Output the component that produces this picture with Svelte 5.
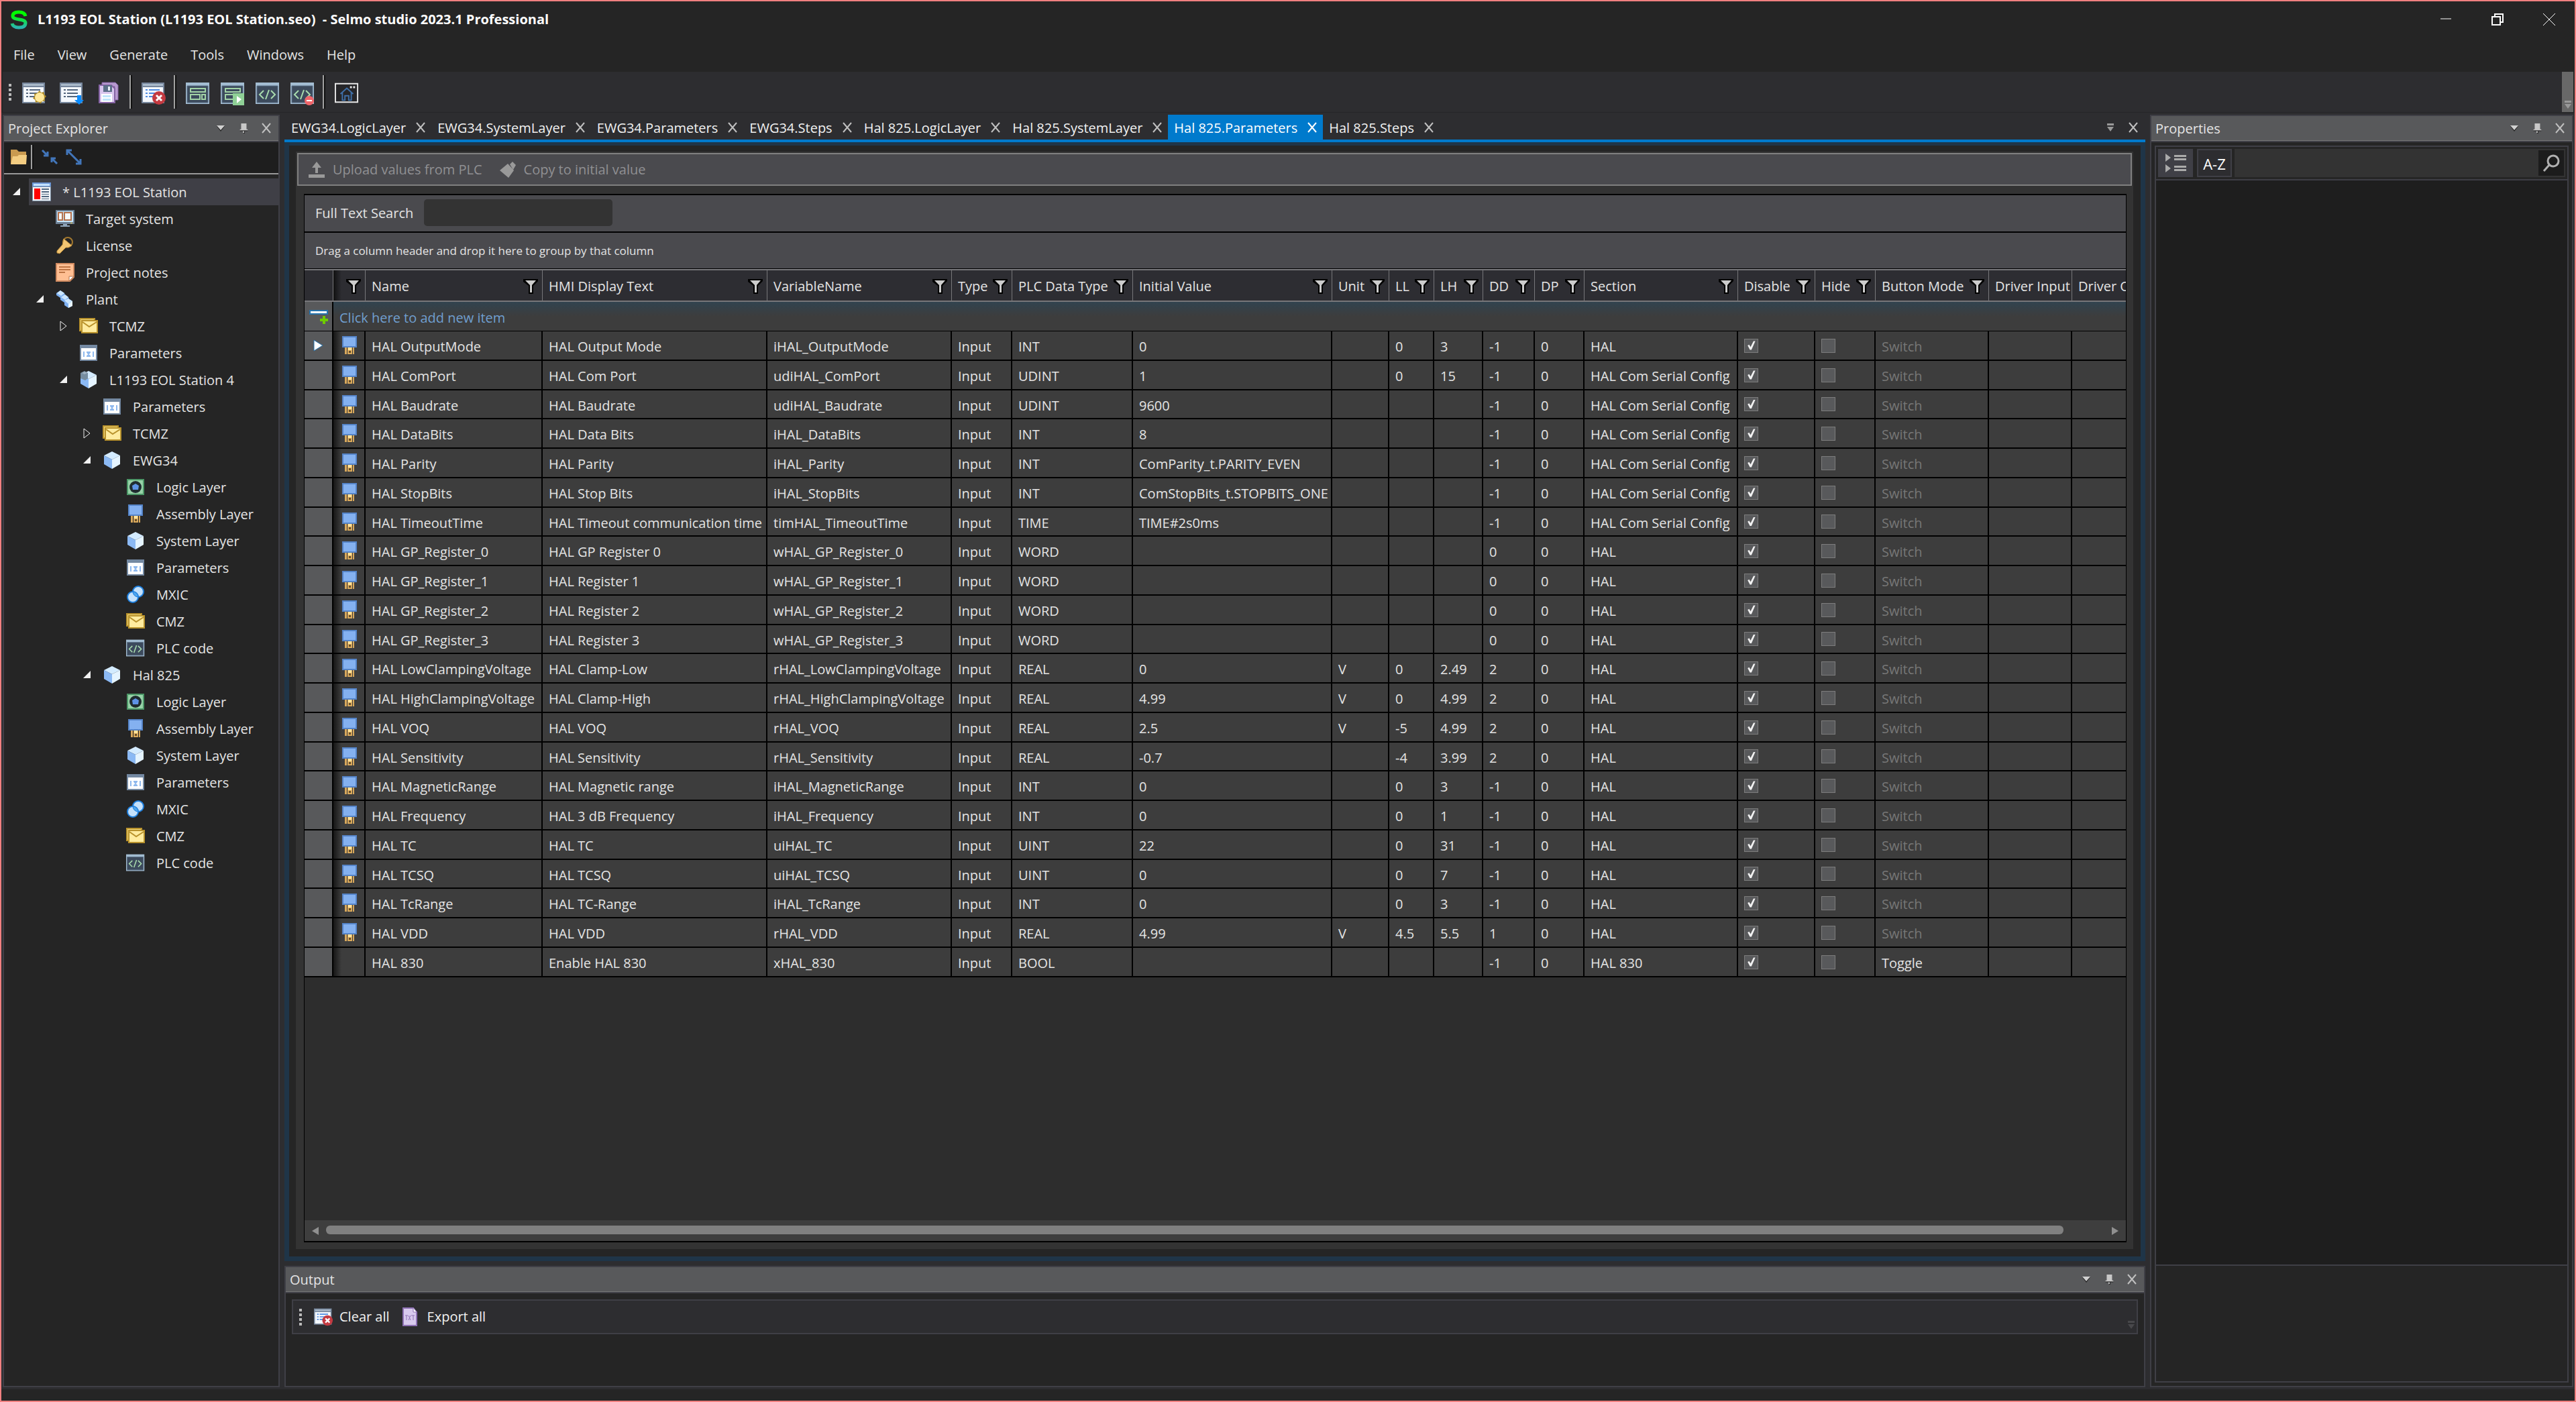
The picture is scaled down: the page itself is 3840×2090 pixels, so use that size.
<script lang="ts">
  type TreeNode = { label: string; icon: string; level: number; state?: 'open' | 'closed'; selected?: boolean };
  type Column = { title: string; width: number; filter: boolean };

  const menus = ['File', 'View', 'Generate', 'Tools', 'Windows', 'Help'];

  const toolGroups = [
    [
      { icon: 'new', label: 'New project' },
      { icon: 'open', label: 'Open project' },
      { icon: 'save', label: 'Save all' },
    ],
    [{ icon: 'close-project', label: 'Close project' }],
    [
      { icon: 'layout', label: 'HMI layout' },
      { icon: 'layout-run', label: 'Run HMI' },
      { icon: 'code', label: 'Generate PLC code' },
      { icon: 'code-remove', label: 'Remove PLC code' },
    ],
    [{ icon: 'home', label: 'Home' }],
  ];

  const zoneChildren: [string, string][] = [
    ['Logic Layer', 'logic'],
    ['Assembly Layer', 'assembly'],
    ['System Layer', 'cube'],
    ['Parameters', 'params'],
    ['MXIC', 'mxic'],
    ['CMZ', 'mail'],
    ['PLC code', 'plc'],
  ];
  const zone = (label: string): TreeNode[] => [
    { label, icon: 'cube', level: 3, state: 'open' },
    ...zoneChildren.map(([l, icon]) => ({ label: l, icon, level: 4 })),
  ];

  const tree: TreeNode[] = [
    { label: '* L1193 EOL Station', icon: 'project', level: 0, state: 'open', selected: true },
    { label: 'Target system', icon: 'target', level: 1 },
    { label: 'License', icon: 'key', level: 1 },
    { label: 'Project notes', icon: 'notes', level: 1 },
    { label: 'Plant', icon: 'plant', level: 1, state: 'open' },
    { label: 'TCMZ', icon: 'mail', level: 2, state: 'closed' },
    { label: 'Parameters', icon: 'params', level: 2 },
    { label: 'L1193 EOL Station 4', icon: 'station', level: 2, state: 'open' },
    { label: 'Parameters', icon: 'params', level: 3 },
    { label: 'TCMZ', icon: 'mail', level: 3, state: 'closed' },
    ...zone('EWG34'),
    ...zone('Hal 825'),
  ];

  const tabs = [
    'EWG34.LogicLayer',
    'EWG34.SystemLayer',
    'EWG34.Parameters',
    'EWG34.Steps',
    'Hal 825.LogicLayer',
    'Hal 825.SystemLayer',
    'Hal 825.Parameters',
    'Hal 825.Steps',
  ];
  let activeTab = $state('Hal 825.Parameters');
  let search = $state('');
  let propertySearch = $state('');

  const columns: Column[] = [
    { title: '', width: 43, filter: false },
    { title: '', width: 48, filter: true },
    { title: 'Name', width: 264, filter: true },
    { title: 'HMI Display Text', width: 335, filter: true },
    { title: 'VariableName', width: 275, filter: true },
    { title: 'Type', width: 90, filter: true },
    { title: 'PLC Data Type', width: 180, filter: true },
    { title: 'Initial Value', width: 297, filter: true },
    { title: 'Unit', width: 85, filter: true },
    { title: 'LL', width: 67, filter: true },
    { title: 'LH', width: 73, filter: true },
    { title: 'DD', width: 77, filter: true },
    { title: 'DP', width: 74, filter: true },
    { title: 'Section', width: 229, filter: true },
    { title: 'Disable', width: 115, filter: true },
    { title: 'Hide', width: 90, filter: true },
    { title: 'Button Mode', width: 169, filter: true },
    { title: 'Driver Input', width: 124, filter: false },
    { title: 'Driver Output', width: 180, filter: false },
  ];
  const tableWidth = columns.reduce((sum, c) => sum + c.width, 0);

  // name, display text, variable, data type, initial, unit, LL, LH, DD, DP, section
  const rows: string[][] = [
    ['HAL OutputMode', 'HAL Output Mode', 'iHAL_OutputMode', 'INT', '0', '', '0', '3', '-1', '0', 'HAL'],
    ['HAL ComPort', 'HAL Com Port', 'udiHAL_ComPort', 'UDINT', '1', '', '0', '15', '-1', '0', 'HAL Com Serial Config'],
    ['HAL Baudrate', 'HAL Baudrate', 'udiHAL_Baudrate', 'UDINT', '9600', '', '', '', '-1', '0', 'HAL Com Serial Config'],
    ['HAL DataBits', 'HAL Data Bits', 'iHAL_DataBits', 'INT', '8', '', '', '', '-1', '0', 'HAL Com Serial Config'],
    ['HAL Parity', 'HAL Parity', 'iHAL_Parity', 'INT', 'ComParity_t.PARITY_EVEN', '', '', '', '-1', '0', 'HAL Com Serial Config'],
    ['HAL StopBits', 'HAL Stop Bits', 'iHAL_StopBits', 'INT', 'ComStopBits_t.STOPBITS_ONE', '', '', '', '-1', '0', 'HAL Com Serial Config'],
    ['HAL TimeoutTime', 'HAL Timeout communication time', 'timHAL_TimeoutTime', 'TIME', 'TIME#2s0ms', '', '', '', '-1', '0', 'HAL Com Serial Config'],
    ['HAL GP_Register_0', 'HAL GP Register 0', 'wHAL_GP_Register_0', 'WORD', '', '', '', '', '0', '0', 'HAL'],
    ['HAL GP_Register_1', 'HAL Register 1', 'wHAL_GP_Register_1', 'WORD', '', '', '', '', '0', '0', 'HAL'],
    ['HAL GP_Register_2', 'HAL Register 2', 'wHAL_GP_Register_2', 'WORD', '', '', '', '', '0', '0', 'HAL'],
    ['HAL GP_Register_3', 'HAL Register 3', 'wHAL_GP_Register_3', 'WORD', '', '', '', '', '0', '0', 'HAL'],
    ['HAL LowClampingVoltage', 'HAL Clamp-Low', 'rHAL_LowClampingVoltage', 'REAL', '0', 'V', '0', '2.49', '2', '0', 'HAL'],
    ['HAL HighClampingVoltage', 'HAL Clamp-High', 'rHAL_HighClampingVoltage', 'REAL', '4.99', 'V', '0', '4.99', '2', '0', 'HAL'],
    ['HAL VOQ', 'HAL VOQ', 'rHAL_VOQ', 'REAL', '2.5', 'V', '-5', '4.99', '2', '0', 'HAL'],
    ['HAL Sensitivity', 'HAL Sensitivity', 'rHAL_Sensitivity', 'REAL', '-0.7', '', '-4', '3.99', '2', '0', 'HAL'],
    ['HAL MagneticRange', 'HAL Magnetic range', 'iHAL_MagneticRange', 'INT', '0', '', '0', '3', '-1', '0', 'HAL'],
    ['HAL Frequency', 'HAL 3 dB Frequency', 'iHAL_Frequency', 'INT', '0', '', '0', '1', '-1', '0', 'HAL'],
    ['HAL TC', 'HAL TC', 'uiHAL_TC', 'UINT', '22', '', '0', '31', '-1', '0', 'HAL'],
    ['HAL TCSQ', 'HAL TCSQ', 'uiHAL_TCSQ', 'UINT', '0', '', '0', '7', '-1', '0', 'HAL'],
    ['HAL TcRange', 'HAL TC-Range', 'iHAL_TcRange', 'INT', '0', '', '0', '3', '-1', '0', 'HAL'],
    ['HAL VDD', 'HAL VDD', 'rHAL_VDD', 'REAL', '4.99', 'V', '4.5', '5.5', '1', '0', 'HAL'],
    ['HAL 830', 'Enable HAL 830', 'xHAL_830', 'BOOL', '', '', '', '', '-1', '0', 'HAL 830'],
  ];
</script>

{#snippet cross()}
  <svg class="cross" viewBox="0 0 16 16" aria-hidden="true"><path d="M2 1l12 14M14 1L2 15" /></svg>
{/snippet}

{#snippet panelHeader(title: string)}
  <header class="panel-header">
    <h2>{title}</h2>
    <button aria-label="{title} options"><svg viewBox="0 0 16 16"><path d="M2 5h12L8 13z" fill="#222" /><path d="M2 4h12L8 11z" fill="#d0d0d0" /></svg></button>
    <button aria-label="Pin {title}"><svg viewBox="0 0 16 18"><path d="M4 1h9v10h2v2H2v-2h2z" fill="#c8c8c8" /><path d="M2 13h13v1H2zM8 14h2v4H8z" fill="#222" /><path d="M7 14h2v3H7z" fill="#c8c8c8" /></svg></button>
    <button aria-label="Close {title}">{@render cross()}</button>
  </header>
{/snippet}

{#snippet overflowMark()}
  <svg class="overflow-mark" viewBox="0 0 12 14" aria-hidden="true"><path d="M1 1h10v3H1zM1 6h10l-5 7z" fill="currentColor" /></svg>
{/snippet}

{#snippet icon(name: string)}
  {#if name === 'new' || name === 'open' || name === 'close-project'}
    <svg viewBox="0 0 36 36">
      <path d="M0 2h34v31H0z" fill="#76869c" />
      <path d="M2 4h30v3H2z" fill="#a9b9c9" />
      <path d="M2 9h30v22H2z" fill="#f4f8fd" />
      <path d="M6 12h3v2H6zM6 17h3v2H6zM6 22h3v2H6zM11 12h16v2H11zM11 17h16v2H11zM11 22h16v2H11z" fill={name === 'close-project' ? '#4f8be0' : '#53657c'} />
      {#if name === 'new'}
        <path d="M26 14l2.500 3 4-1 .5 4 3 2.500-2.500 3 .5 4-4 .5-2.500 3.500-3.500-2.500-4 1-.5-4-3.500-2.500 2.500-3-.5-4 4-.5z" fill="#b08b24" />
        <circle cx="26" cy="24" r="7" fill="#ffe89a" />
      {:else if name === 'open'}
        <path d="M26 21h6v7h4l-7 7-7-7h4z" fill="#0a8cff" />
      {:else}
        <circle cx="26" cy="25" r="10" fill="#c43a41" />
        <path d="M22 21l8 8M30 21l-8 8" stroke="#fff" stroke-width="3" />
      {/if}
    </svg>
  {:else if name === 'save'}
    <svg viewBox="0 0 36 36">
      <path d="M7 2h20l4 4v22h-5V8H7z" fill="#b79ad0" stroke="#8563a4" />
      <path d="M3 6h18l5 5v21H3z" fill="#d9c7ee" stroke="#8563a4" stroke-width="2" />
      <path d="M9 6h13v10H9z" fill="#5b6f88" /><path d="M16 8h3v6h-3z" fill="#e8eef6" />
      <path d="M6 19h16v12H6z" fill="#fff" /><path d="M8 21h12v3H8zM8 26h12v3H8z" fill="#bfe6fb" />
    </svg>
  {:else if name === 'layout' || name === 'layout-run' || name === 'code' || name === 'code-remove' || name === 'plc'}
    <svg viewBox="0 0 36 36">
      <path d="M0 2h35v32H0z" fill="#a3bdd2" />
      <path d="M2 7h31v25H2z" fill="#3c4a5c" stroke="#5a6f86" />
      {#if name.startsWith('layout')}
        <path d="M7 11h22v5H7zM7 20h14v7H7zM24 20h5v7h-5z" fill="none" stroke="#a2d3a6" stroke-width="2" />
      {:else}
        <path d="M12 14l-6 6 6 6M23 14l6 6-6 6M20 13l-5 14" fill="none" stroke="#a9dcae" stroke-width="2" />
      {/if}
      {#if name === 'layout-run'}
        <path d="M18 18h17v18H18z" fill="#8fd096" /><path d="M24 22l7 5-7 6z" fill="#fff" />
      {:else if name === 'code-remove'}
        <circle cx="28" cy="29" r="7" fill="#f0666b" /><path d="M24 28h8v2h-8z" fill="#fff" />
      {/if}
    </svg>
  {:else if name === 'home'}
    <svg viewBox="0 0 38 34">
      <path d="M1 2h35v29H1z" fill="#252528" stroke="#e8e8e8" stroke-width="2" />
      <path d="M24 6h3v3h-3zM29 6h3v3h-3z" fill="#e8e8e8" />
      <path d="M9 18L19 9l10 9M12 16v12h4v-7h6v7h4V16" fill="none" stroke="#3f6fa8" stroke-width="2" />
    </svg>
  {:else if name === 'project'}
    <svg viewBox="0 0 28 28">
      <path d="M0 0h28v28H0z" fill="#7e90a6" /><path d="M0 0h28v6H0z" fill="#6b97d6" /><path d="M2 2h24v3H2z" fill="#c4e2ff" />
      <path d="M1 7h26v20H1z" fill="#f2f6fa" /><path d="M3 9h9v16H3z" fill="#f00" />
      <path d="M14 9h11v2H14zM14 13h11v2H14zM14 17h11v1H14zM14 20h11v2H14zM14 24h11v1H14z" fill="#51677f" />
    </svg>
  {:else if name === 'target'}
    <svg viewBox="0 0 28 28">
      <path d="M0 1h28v21H0z" fill="#6d8196" /><path d="M2 3h24v16H2z" fill="#c9e7fb" />
      <path d="M4 5h6v11H4zM13 5h10v11H13z" fill="#f5f8fb" stroke="#b5714c" stroke-width="2" />
      <path d="M22 20h3v1h-3z" fill="#f5cf4a" /><path d="M11 22h6v2h4v2H7v-2h4z" fill="#8fa5ba" />
    </svg>
  {:else if name === 'key'}
    <svg viewBox="0 0 28 28">
      <circle cx="18" cy="9" r="7" fill="none" stroke="#a2782f" stroke-width="2" />
      <path d="M12 4l12 10-5 3-4 0-9 9-4-1v-3l8-9z" fill="#f2c572" stroke="#c3923c" />
    </svg>
  {:else if name === 'notes'}
    <svg viewBox="0 0 28 28">
      <path d="M1 1h26v20l-6 6H1z" fill="#ffbf93" stroke="#d08b61" stroke-width="2" />
      <path d="M5 6h17M5 10h17M5 14h9" stroke="#bc7444" stroke-width="2" /><path d="M20 27v-7h7z" fill="#fff" stroke="#b4724a" />
    </svg>
  {:else if name === 'plant'}
    <svg viewBox="0 0 28 28">
      <path d="M1 5l6-4 6 4 1 3 5 3 1 3 5 3v7l-6 3-6-4v-4l-6-4v-3l-6-4z" fill="#7eb1f2" />
      <path d="M2 5l5-4 6 4-5 4zM8 11l6-4 5 4-5 4zM13 16l6-3 6 4-6 4z" fill="#cbe6ff" /><path d="M19 21l6-4v7l-6 3z" fill="#e9f6ff" />
    </svg>
  {:else if name === 'cube' || name === 'station'}
    <svg viewBox="0 0 28 28">
      <path d="M2 7l12-6 12 6-12 6z" fill="#d3ebff" /><path d="M2 7l12 6v14L2 20z" fill="#8bb9f4" /><path d="M26 7l-12 6v14l12-7z" fill="#e5f4ff" />
      {#if name === 'station'}
        <path d="M2 4l6-3 5 3v8l-4 3-7-3z" fill="#768da0" /><path d="M4 4l4-2 4 2-4 2z" fill="#9fb2c2" />
      {/if}
    </svg>
  {:else if name === 'mail'}
    <svg viewBox="0 0 28 28">
      <path d="M1 3h22v18H1z" fill="#f1d67a" stroke="#b8922c" stroke-width="2" />
      <path d="M4 6h23v18H4z" fill="#ffec9f" stroke="#b8922c" stroke-width="2" /><path d="M5 8l10 7L26 8" fill="none" stroke="#b8922c" stroke-width="2" />
    </svg>
  {:else if name === 'params'}
    <svg viewBox="0 0 28 28">
      <path d="M1 2h26v24H1z" fill="#7489a2" /><path d="M3 7h22v17H3z" fill="#fff" />
      <path d="M7 12v8M21 12v8M11 13h6M11 19h6M12 13l4 6M16 13l-4 6" stroke="#8fb9ee" stroke-width="2" />
    </svg>
  {:else if name === 'logic'}
    <svg viewBox="0 0 28 28">
      <path d="M2 3h24v22H2z" fill="#97d3a8" stroke="#4c9767" stroke-width="2" />
      <circle cx="14" cy="14" r="9" fill="#202c31" /><path d="M14 9l5 3-1 6h-8l-1-6z" fill="#5e93e6" />
    </svg>
  {:else if name === 'assembly'}
    <svg viewBox="0 0 28 28">
      <path d="M4 1h20v15H4z" fill="#84b1f0" stroke="#5584c8" stroke-width="2" />
      <path d="M7 17h3v10H7zM19 17h2v10h-2zM11 17h7v10h-7z" fill="#d9a95c" /><path d="M12 17h5v4h-5z" fill="#ffe39b" /><path d="M13 22h3v3h-3z" fill="#69502a" />
    </svg>
  {:else if name === 'mxic'}
    <svg viewBox="0 0 28 28">
      <circle cx="18" cy="10" r="8" fill="#c4e1fb" stroke="#1e7fdd" stroke-width="2" /><circle cx="10" cy="18" r="8" fill="#c4e1fb" stroke="#1e7fdd" stroke-width="2" />
      <path d="M10 10a8 8 0 0 1 8 8 8 8 0 0 1-8-8z" fill="#4da6ef" stroke="#1e7fdd" />
    </svg>
  {/if}
{/snippet}

<div class="window">
  <header class="titlebar">
    <svg class="logo" viewBox="0 0 28 30" aria-hidden="true">
      <defs><linearGradient id="logo" x1="0" y1="0" x2="0" y2="1"><stop offset="0.2" stop-color="#0f0" /><stop offset="1" stop-color="#2ab5b0" /></linearGradient></defs>
      <path d="M24 10C23 5 19 4 14 4 8 4 5 6 5 10c0 7 19 3 19 10 0 5-4 7-10 7-6 0-9-2-10-6" fill="none" stroke="url(#logo)" stroke-width="5" />
    </svg>
    <h1>L1193 EOL Station (L1193 EOL Station.seo)&nbsp; - Selmo studio 2023.1 Professional</h1>
    <div class="window-buttons">
      <button aria-label="Minimize"><svg viewBox="0 0 20 20"><path d="M2 9h16" /></svg></button>
      <button aria-label="Restore"><svg viewBox="0 0 20 20"><path d="M2 6h12v12H2zM6 6V2h12v12h-4" stroke-width="2" /></svg></button>
      <button aria-label="Close"><svg viewBox="0 0 20 20"><path d="M1 1l18 18M19 1L1 19" /></svg></button>
    </div>
  </header>

  <nav class="menubar">
    {#each menus as menu (menu)}
      <button>{menu}</button>
    {/each}
  </nav>

  <div class="toolbar">
    <span class="grip"></span>
    {#each toolGroups as group, i (i)}
      {#if i > 0}<span class="separator"></span>{/if}
      <div class="tool-group" class:first={i === 0}>
        {#each group as tool (tool.icon)}
          <button aria-label={tool.label}>{@render icon(tool.icon)}</button>
        {/each}
      </div>
    {/each}
    <button class="toolbar-overflow" aria-label="Toolbar options">{@render overflowMark()}</button>
  </div>

  <div class="workspace">
    <aside class="panel explorer">
      {@render panelHeader('Project Explorer')}
      <div class="explorer-tools">
        <button aria-label="Open folder"><svg viewBox="0 0 26 24"><path d="M1 1h9l3 3h11v18H1z" fill="#c99a50" /><path d="M1 23l3-12h7l2-2h12l-1 14z" fill="#f3cd82" /></svg></button>
        <span class="separator"></span>
        <button aria-label="Collapse all"><svg viewBox="0 0 24 24"><path d="M1 2l8 8M9 4v6H3M23 22l-8-8M15 20v-6h6" fill="none" stroke="#4276ba" stroke-width="3" /></svg></button>
        <button aria-label="Expand all"><svg viewBox="0 0 24 24"><path d="M2 2l20 20M2 9V2h7M22 15v7h-7" fill="none" stroke="#4276ba" stroke-width="3" /></svg></button>
      </div>
      <ul class="tree">
        {#each tree as node, i (i)}
          <li style="padding-left: {node.level * 35}px">
            <span class="expander">
              {#if node.state === 'open'}
                <svg viewBox="0 0 12 16"><path d="M11 2v11H0z" fill="#f1f1f1" /></svg>
              {:else if node.state === 'closed'}
                <svg viewBox="0 0 12 16"><path d="M1 1l9 7-9 7z" fill="none" stroke="#f1f1f1" /></svg>
              {/if}
            </span>
            <span class="node" class:selected={node.selected}>{@render icon(node.icon)}<span class="label">{node.label}</span></span>
          </li>
        {/each}
      </ul>
    </aside>

    <main class="center">
      <div class="tabs">
        {#each tabs as tab (tab)}
          <div class="tab" class:active={tab === activeTab}>
            <button class="label" onclick={() => (activeTab = tab)}>{tab}</button>
            <button aria-label="Close {tab}">{@render cross()}</button>
          </div>
        {/each}
        <div class="tab-actions">
          <button aria-label="Tab list">{@render overflowMark()}</button>
          <button aria-label="Close document">{@render cross()}</button>
        </div>
      </div>

      <section class="document">
        <div class="document-frame">
          <div class="document-body">
            <div class="plc-actions">
              <button disabled><svg viewBox="0 0 26 26"><path d="M13 1l7 9h-5v8h-4v-8H6zM1 20h24v5H1z" /></svg>Upload values from PLC</button>
              <button disabled><svg viewBox="0 0 26 26"><path d="M13 4l9 10-8 11L1 14zM16 5l4-4 5 5-4 7z" /></svg>Copy to initial value</button>
            </div>

            <div class="grid">
              <div class="search-row">
                <label for="full-text">Full Text Search</label>
                <input id="full-text" type="text" bind:value={search} />
              </div>
              <div class="group-row">Drag a column header and drop it here to group by that column</div>
              <div class="table-area">
                <table style="width: {tableWidth}px">
                  <colgroup>
                    {#each columns as column, i (i)}<col style="width: {column.width}px" />{/each}
                  </colgroup>
                  <thead>
                    <tr>
                      {#each columns as column, i (i)}
                        <th class:shaded={i === 1}>
                          <div class="head-cell">
                            <span>{column.title}</span>
                            {#if column.filter}
                              <button aria-label="Filter {column.title}"><svg viewBox="0 0 22 22"><path d="M0 0h22v3l-7 7v12H8V10L0 4z" fill="#000" /><path d="M3 2h16l-6 7v11h-3V9z" fill="#ccc" /></svg></button>
                            {/if}
                          </div>
                        </th>
                      {/each}
                    </tr>
                    <tr class="new-item">
                      <td class="row-header"><svg class="add-icon" viewBox="0 0 30 22"><path d="M1 2h26v5H1z" fill="#fff" stroke="#2673ad" stroke-width="2" /><path d="M20 10h4v4h4v4h-4v4h-4v-4h-4v-4h4z" fill="#6ecb00" /></svg></td>
                      <td colspan={columns.length - 1}>Click here to add new item</td>
                    </tr>
                  </thead>
                  <tbody>
                    {#each rows as row, i (row[0])}
                      {@const toggle = i === rows.length - 1}
                      <tr>
                        <td class="row-header">
                          {#if i === 0}<svg class="current" viewBox="0 0 18 18"><path d="M2 1l13 8-13 8z" fill="#fff" stroke="#2673ad" /></svg>{/if}
                        </td>
                        <td class="shaded layer-cell">{#if !toggle}{@render icon('assembly')}{/if}</td>
                        {#each row.slice(0, 3) as value, j (j)}<td>{value}</td>{/each}
                        <td>Input</td>
                        {#each row.slice(3) as value, j (j)}<td>{value}</td>{/each}
                        <td class="check"><input type="checkbox" checked aria-label="Disable {row[0]}" /></td>
                        <td class="check"><input type="checkbox" aria-label="Hide {row[0]}" /></td>
                        <td class:muted={!toggle}>{toggle ? 'Toggle' : 'Switch'}</td>
                        <td></td>
                        <td></td>
                      </tr>
                    {/each}
                  </tbody>
                </table>
              </div>
              <div class="scrollbar">
                <button aria-label="Scroll left"><svg viewBox="0 0 12 14"><path d="M11 1v12L1 7z" /></svg></button>
                <div class="track"><div class="thumb"></div></div>
                <button aria-label="Scroll right"><svg viewBox="0 0 12 14"><path d="M1 1v12l10-6z" /></svg></button>
              </div>
            </div>
          </div>
        </div>
      </section>

      <section class="panel output">
        {@render panelHeader('Output')}
        <div class="output-tools">
          <span class="grip"></span>
          <button>{@render icon('close-project')}Clear all</button>
          <button><svg viewBox="0 0 28 28"><path d="M2 1h15l5 6v20H2z" fill="#d8caee" stroke="#8f72b5" stroke-width="2" /><path d="M17 1v6h5" fill="#fff" stroke="#8f72b5" /><path d="M5 12h4M7 12v7M10 12l3 7M13 12l-3 7M14 12h5M17 12v7" stroke="#8f72b5" /></svg>Export all</button>
          <span class="output-overflow">{@render overflowMark()}</span>
        </div>
      </section>
    </main>

    <aside class="panel properties">
      {@render panelHeader('Properties')}
      <div class="property-box">
        <div class="property-tools">
          <button class="grouped" aria-label="Group by category"><svg viewBox="0 0 32 30"><path d="M0 1l8 6-8 6zM0 17l8 6-8 6z" /><path d="M13 3h18v3H13zM13 8h18v3H13zM13 19h18v3H13zM13 24h18v3H13z" /></svg></button>
          <button class="sorted">A-Z</button>
          <div class="property-search">
            <input type="text" aria-label="Search properties" bind:value={propertySearch} />
            <button aria-label="Search"><svg viewBox="0 0 26 26"><circle cx="16" cy="10" r="8" /><path d="M10 16l-8 9" /></svg></button>
          </div>
        </div>
        <div class="property-list"></div>
        <div class="property-description"></div>
      </div>
    </aside>
  </div>
</div>

<style>
  :global(body) {
    margin: 0;
    background: #252525;
  }
  .window {
    box-sizing: border-box;
    min-height: 100vh;
    display: flex;
    flex-direction: column;
    border: 2px solid #f08080;
    padding-bottom: 17px;
    background: #252525;
    color: #e4e4e4;
    font-family: 'Open Sans', 'Noto Sans', sans-serif;
    font-size: 20px;
    line-height: 28px;
  }
  button, input {
    font: inherit;
    color: inherit;
    background: none;
    border: 0;
    padding: 0;
    margin: 0;
  }
  svg {
    display: block;
    flex: none;
  }
  h1, h2 {
    margin: 0;
    font-size: 20px;
  }
  .titlebar {
    display: flex;
    align-items: center;
    height: 54px;
    padding: 0 28px 0 12px;
    color: #fff;
  }
  .logo {
    width: 28px;
    height: 30px;
    margin: 0 14px 0 0;
  }
  h1 {
    flex: 1;
  }
  .window-buttons {
    display: flex;
    gap: 57px;
  }
  .window-buttons svg {
    width: 20px;
    height: 20px;
    fill: none;
    stroke: #fff;
  }
  .menubar {
    display: flex;
    gap: 34px;
    height: 51px;
    padding-left: 18px;
  }
  .toolbar {
    display: flex;
    align-items: center;
    height: 61px;
    margin: 0 2px;
    padding-left: 9px;
    background: #2d2d30;
    border-bottom: 1px solid #252528;
    box-sizing: border-box;
  }
  .grip {
    width: 4px;
    height: 25px;
    background: repeating-linear-gradient(#bbb 0 4px, transparent 4px 7px);
  }
  .separator {
    width: 2px;
    height: 50px;
    background: #a0a0a0;
    border-right: 2px solid #111;
    margin: 0 14px 0 12px;
  }
  .tool-group {
    display: flex;
    gap: 16px;
    padding-top: 4px;
  }
  .tool-group.first {
    gap: 20px;
    margin-left: 16px;
  }
  .tool-group svg {
    width: 36px;
    height: 36px;
  }
  .toolbar-overflow {
    align-self: stretch;
    display: flex;
    align-items: flex-end;
    justify-content: center;
    width: 17px;
    margin-left: auto;
    padding-bottom: 4px;
    background: #686868;
    color: #999;
  }
  .overflow-mark {
    width: 12px;
    height: 14px;
  }
  .workspace {
    flex: 1;
    display: flex;
    gap: 7px;
    padding: 3px 2px;
    background: #2d2d30;
  }
  .panel {
    box-sizing: border-box;
    display: flex;
    flex-direction: column;
    border: 2px solid #3f3f46;
    background: #252525;
  }
  .panel-header {
    display: flex;
    align-items: center;
    gap: 18px;
    height: 36px;
    padding: 0 10px 0 6px;
    background: #58595b;
    border-bottom: 1px solid #777;
    box-shadow: 0 2px 0 #3f3f46;
  }
  .panel-header h2 {
    flex: 1;
    padding-top: 2px;
    font-weight: 400;
  }
  .panel-header svg {
    width: 16px;
    height: 16px;
  }
  .cross {
    width: 16px;
    height: 16px;
    fill: none;
    stroke: #c0c0c0;
    stroke-width: 2;
  }
  .label {
    padding-top: 2px;
  }
  .explorer {
    flex: 0 0 413px;
  }
  .explorer-tools {
    display: flex;
    align-items: center;
    height: 43px;
    margin-top: 2px;
    padding-left: 9px;
    padding-bottom: 3px;
    background: #1e1e1e;
    border-bottom: 2px solid #999;
  }
  .explorer-tools svg {
    width: 26px;
    height: 24px;
  }
  .explorer-tools .separator {
    height: 36px;
    margin: 0 11px 0 5px;
  }
  .explorer-tools button + button {
    margin-left: 10px;
  }
  .tree {
    list-style: none;
    margin: 0;
    padding: 6px 0 0;
  }
  .tree li {
    display: flex;
    height: 40px;
  }
  .expander {
    display: flex;
    align-items: center;
    width: 37px;
    box-sizing: border-box;
    padding-left: 13px;
  }
  .expander svg {
    width: 12px;
    height: 16px;
  }
  .node {
    flex: 1;
    display: flex;
    align-items: center;
    gap: 17px;
    padding-left: 5px;
  }
  .node.selected {
    background: #3f3f46;
  }
  .node :global(svg) {
    width: 28px;
    height: 28px;
  }
  .center {
    flex: 1;
    min-width: 0;
    display: flex;
    flex-direction: column;
  }
  .tabs {
    display: flex;
    height: 37px;
    padding-left: 1px;
  }
  .tab {
    display: flex;
    align-items: center;
    gap: 14px;
    padding: 0 8px 0 9px;
    color: #f1f1f1;
  }
  .tab.active {
    background: #007acc;
    color: #fff;
  }
  .tab.active .cross {
    stroke: #fff;
  }
  .tab-actions {
    display: flex;
    align-items: center;
    gap: 20px;
    margin-left: auto;
    padding-right: 10px;
    color: #999;
  }
  .document {
    flex: 1;
    display: flex;
    border-top: 4px solid #007acc;
  }
  .document-frame {
    flex: 1;
    min-width: 0;
    display: flex;
    padding: 9px 11px 11px 10px;
    border: 7px solid #1f3548;
    border-top-width: 5px;
    background: #252525;
  }
  .document-body {
    flex: 1;
    min-width: 0;
    display: flex;
    flex-direction: column;
    gap: 12px;
    padding: 2px 2px 10px;
    background: #333;
  }
  .plc-actions {
    display: flex;
    align-items: center;
    gap: 25px;
    height: 45px;
    padding-left: 14px;
    border: 2px solid #808080;
    background: #4a4a4e;
  }
  .plc-actions button {
    display: flex;
    align-items: center;
    gap: 11px;
    color: #909093;
  }
  .plc-actions svg {
    width: 26px;
    height: 26px;
    fill: #999;
  }
  .grid {
    flex: 1;
    display: flex;
    flex-direction: column;
    margin: 0 8px 0 10px;
    border: 1px solid #000;
    border-width: 2px 1px;
    background: #2d2d2d;
  }
  .search-row {
    display: flex;
    align-items: center;
    gap: 16px;
    height: 54px;
    padding-left: 16px;
    background: #4a4a4e;
    border-bottom: 2px solid #000;
  }
  .search-row input {
    width: 281px;
    height: 40px;
    box-sizing: border-box;
    padding: 0 10px;
    margin-bottom: 2px;
    border-radius: 5px;
    background: #333;
  }
  .group-row {
    height: 53px;
    padding-left: 16px;
    background: #4a4a4e;
    border-bottom: 1px solid #000;
    font-size: 17px;
    line-height: 54px;
  }
  .table-area {
    flex: 1;
    overflow: hidden;
  }
  table {
    table-layout: fixed;
    border-collapse: separate;
    border-spacing: 0;
  }
  th, td {
    box-sizing: border-box;
    height: 44px;
    padding: 4px 0 0 9px;
    white-space: nowrap;
    text-align: left;
    font-weight: 400;
    overflow: hidden;
  }
  th {
    height: 49px;
    padding-top: 2px;
    padding-right: 6px;
    background: #2d2d32;
    border: 2px solid #77777a;
    border-width: 2px 1px 2px 0;
  }
  td {
    background: #3d3d3d;
    border-right: 2px solid #000;
    border-bottom: 2px solid #000;
  }
  tbody tr:nth-child(4n + 3) td {
    height: 43px;
  }
  .head-cell {
    display: flex;
    align-items: center;
    justify-content: space-between;
  }
  .head-cell svg {
    width: 22px;
    height: 22px;
  }
  .new-item td {
    color: #6f9fd0;
    background: linear-gradient(#31434f, #3d3d3d 50%);
    border-bottom-width: 1px;
  }
  td.row-header, .new-item td.row-header {
    padding: 0;
    background: #58595b;
  }
  .add-icon {
    width: 30px;
    height: 22px;
    margin-left: 7px;
  }
  .current {
    width: 18px;
    height: 18px;
    margin-left: 12px;
  }
  td.shaded {
    background: linear-gradient(to right, #161616, #3d3d3d 12px);
  }
  th.shaded {
    background: linear-gradient(to right, #111, #2d2d32 12px);
  }
  .layer-cell {
    padding: 0 0 0 10px;
  }
  .layer-cell :global(svg) {
    width: 28px;
    height: 28px;
  }
  .muted {
    color: #777;
  }
  .check {
    padding-top: 0;
  }
  .check input {
    appearance: none;
    display: block;
    width: 21px;
    height: 21px;
    border: 1px solid #7d7d7d;
    background: #58595b;
  }
  .check input:checked::before {
    content: '';
    display: block;
    width: 19px;
    height: 19px;
    background: #f1f1f1;
    clip-path: polygon(22% 50%, 34% 44%, 45% 62%, 68% 16%, 82% 16%, 52% 84%, 40% 84%);
  }
  .scrollbar {
    display: flex;
    align-items: center;
    gap: 10px;
    height: 31px;
    padding: 0 10px;
    background: #3e3e3e;
  }
  .scrollbar svg {
    width: 12px;
    height: 14px;
    fill: #909090;
  }
  .track {
    flex: 1;
    padding: 0 8px 2px 0;
  }
  .thumb {
    width: 98%;
    height: 13px;
    border-radius: 6px;
    background: #808080;
  }
  .output {
    height: 181px;
    margin-top: 7px;
  }
  .output-tools {
    display: flex;
    align-items: center;
    height: 48px;
    margin: 11px 9px 0;
    padding-left: 9px;
    border: 2px solid #3f3f46;
    background: #2d2d30;
    color: #f1f1f1;
  }
  .output-tools button {
    display: flex;
    align-items: center;
    gap: 10px;
    margin-left: 18px;
  }
  .output-tools button :global(svg) {
    width: 28px;
    height: 28px;
  }
  .output-overflow {
    margin: 24px 2px 0 auto;
    color: #48484b;
  }
  .properties {
    flex: 0 0 631px;
  }
  .property-box {
    flex: 1;
    display: flex;
    flex-direction: column;
    margin: 7px 5px 5px;
    border: 2px solid #3f3f46;
  }
  .property-tools {
    display: flex;
    height: 42px;
    padding: 3px;
    border-bottom: 2px solid #3f3f46;
  }
  .property-tools > button {
    width: 52px;
    box-sizing: border-box;
    margin-right: 6px;
    border: 2px solid #3f3f46;
    background: #2d2d30;
  }
  .property-tools .grouped {
    padding-left: 9px;
    background: #3f3f46;
  }
  .grouped svg {
    width: 32px;
    height: 30px;
    fill: #aaa;
  }
  .property-tools .sorted {
    margin-right: 4px;
    padding-top: 2px;
    color: #fff;
    font-size: 22px;
  }
  .property-search {
    flex: 1;
    display: flex;
    padding: 2px;
    background: #333;
  }
  .property-search input {
    flex: 1;
  }
  .property-search button {
    display: flex;
    align-items: center;
    justify-content: center;
    width: 38px;
    background: #1c1c1c;
  }
  .property-search svg {
    width: 26px;
    height: 26px;
    fill: none;
    stroke: #b0b0b0;
    stroke-width: 3;
  }
  .property-list {
    flex: 1;
    background: #1e1e1e;
    border-bottom: 2px solid #3f3f46;
  }
  .property-description {
    height: 172px;
  }
</style>
